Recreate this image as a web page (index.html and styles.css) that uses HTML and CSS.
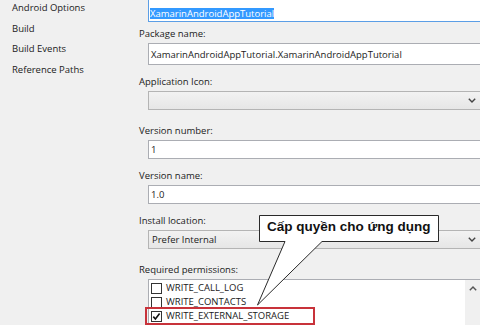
FILE: index.html
```html
<!DOCTYPE html>
<html>
<head>
<meta charset="utf-8">
<link rel="stylesheet" href="styles.css">
</head>
<body>
<div class="page">
  <nav class="nav">
    <div class="nav-item">Android Options</div>
    <div class="nav-item">Build</div>
    <div class="nav-item">Build Events</div>
    <div class="nav-item">Reference Paths</div>
  </nav>
  <main class="form">
    <div class="input input-focus"><span class="sel">XamarinAndroidAppTutorial</span></div>
    <div class="field field-first">
      <div class="label">Package name:</div>
      <div class="input input-tall">XamarinAndroidAppTutorial.XamarinAndroidAppTutorial</div>
    </div>
    <div class="field">
      <div class="label">Application Icon:</div>
      <div class="combo"><span class="combo-text"></span><svg class="chev" width="8" height="5" viewBox="0 0 8 5"><path d="M0.8,0.8 L4,4 L7.2,0.8" fill="none" stroke="#444" stroke-width="1.4"/></svg></div>
    </div>
    <div class="field">
      <div class="label">Version number:</div>
      <div class="input">1</div>
    </div>
    <div class="field">
      <div class="label">Version name:</div>
      <div class="input">1.0</div>
    </div>
    <div class="field">
      <div class="label">Install location:</div>
      <div class="combo"><span class="combo-text">Prefer Internal</span><svg class="chev" width="8" height="5" viewBox="0 0 8 5"><path d="M0.8,0.8 L4,4 L7.2,0.8" fill="none" stroke="#444" stroke-width="1.4"/></svg></div>
    </div>
    <div class="field">
      <div class="label">Required permissions:</div>
      <div class="list">
        <div class="list-items">
          <div class="item"><span class="cb"></span>WRITE_CALL_LOG</div>
          <div class="item"><span class="cb"></span>WRITE_CONTACTS</div>
          <div class="item"><span class="cb"><svg width="9" height="9" viewBox="0 0 9 9"><path d="M1.3,4.6 L3.4,7 L7.6,1.6" fill="none" stroke="#111" stroke-width="1.6"/></svg></span>WRITE_EXTERNAL_STORAGE</div>
        </div>
        <div class="scrollbar"><svg class="up" width="8" height="5" viewBox="0 0 8 5"><path d="M0.8,4.2 L4,1 L7.2,4.2" fill="none" stroke="#555" stroke-width="1.4"/></svg></div>
      </div>
    </div>
  </main>
  <div class="highlight"></div>
  <div class="callout">
    <svg class="callout-shape" width="186" height="95" viewBox="0 0 186 95"><path d="M3.5,1.5 H182.5 V27.5 H66 L1.5,91 L29,27.5 H3.5 Z" fill="#fff" stroke="#2a2a2a" stroke-width="1"/></svg>
    <span class="callout-text">Cấp quyền cho ứng dụng</span>
  </div>
</div>
</body>
</html>
```

FILE: styles.css
```css
html, body {
  margin: 0;
  padding: 0;
  background: #f0f0f0;
  overflow: hidden;
}
body {
  font-family: "Open Sans", "Noto Sans", sans-serif;
  font-size: 9.5px;
  color: #1b1b1b;
}
.page {
  position: relative;
  display: flex;
  width: 480px;
  height: 325px;
  overflow: hidden;
}
.nav {
  width: 139px;
  flex: none;
  box-sizing: border-box;
  padding-left: 12px;
  margin-top: -2px;
}
.nav-item {
  line-height: 20.7px;
  white-space: nowrap;
}
.form {
  flex: 1;
  min-width: 0;
  display: flex;
  flex-direction: column;
}
.field {
  display: flex;
  flex-direction: column;
  margin-top: 11px;
}
.field-first {
  margin-top: 6px;
}
.label {
  height: 12px;
  line-height: 12px;
  margin-bottom: 3px;
  white-space: nowrap;
}
.input, .combo, .list {
  margin-left: 9px;
  width: 334px;
  box-sizing: border-box;
  flex: none;
}
.input {
  height: 19px;
  border: 1px solid #abadb3;
  background: #fff;
  padding-left: 2px;
  display: flex;
  align-items: center;
  white-space: nowrap;
}
.input-tall {
  height: 22px;
}
.input-focus {
  height: 23px;
  margin-top: -1px;
  border-color: #5b9ee6;
  align-items: flex-start;
  padding-top: 8px;
  padding-left: 1px;
}
.sel {
  display: inline-block;
  height: 11px;
  line-height: 11px;
  background: #3399ff;
  color: #fff;
}
.combo {
  height: 19px;
  margin-bottom: 4px;
  border: 1px solid #b4b4b4;
  background: linear-gradient(#f2f2f2, #e6e6e6);
  display: flex;
  align-items: center;
  justify-content: space-between;
  padding-left: 3px;
  padding-right: 5px;
  white-space: nowrap;
}
.chev {
  display: block;
}
.list {
  width: 333px;
  height: 60px;
  border: 1px solid #abadb3;
  background: #fff;
  display: flex;
}
.list-items {
  flex: 1;
  padding-top: 1px;
  padding-left: 2px;
}
.item {
  height: 14.2px;
  line-height: 14px;
  display: flex;
  align-items: center;
  white-space: nowrap;
}
.cb {
  width: 11px;
  height: 11px;
  box-sizing: border-box;
  border: 1px solid #333;
  background: #fff;
  margin-right: 4px;
  display: flex;
  align-items: center;
  justify-content: center;
  flex: none;
}
.cb svg {
  display: block;
}
.scrollbar {
  width: 15px;
  flex: none;
  background: #f0f0f0;
  display: flex;
  justify-content: center;
  padding-top: 6px;
  box-sizing: border-box;
}
.up {
  display: block;
}
.highlight {
  position: absolute;
  left: 145px;
  top: 307px;
  width: 170px;
  height: 18px;
  box-sizing: border-box;
  border: 2px solid #c8323a;
}
.callout {
  position: absolute;
  left: 256px;
  top: 214px;
  width: 186px;
  height: 95px;
  pointer-events: none;
}
.callout-shape {
  position: absolute;
  left: 0;
  top: 0;
  display: block;
}
.callout-text {
  position: absolute;
  left: 11px;
  top: 5px;
  font-family: "Liberation Sans", Arial, sans-serif;
  font-weight: bold;
  font-size: 13.5px;
  line-height: 16px;
  color: #111;
  white-space: nowrap;
}
```
